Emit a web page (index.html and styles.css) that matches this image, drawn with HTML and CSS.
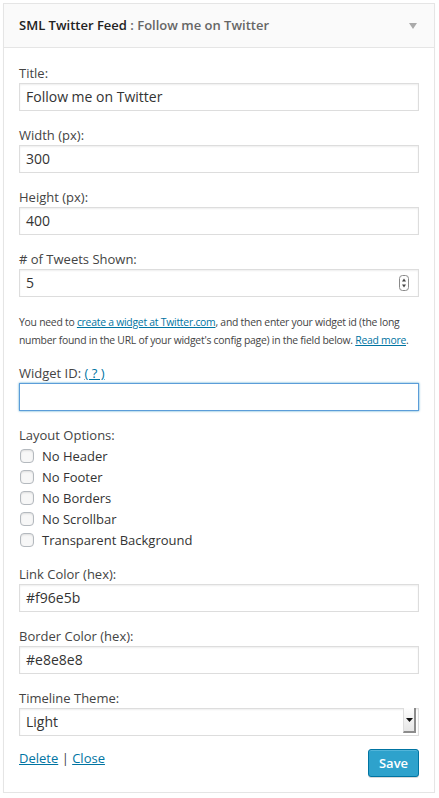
FILE: index.html
```html
<!DOCTYPE html>
<html>
<head>
<meta charset="utf-8">
<link rel="stylesheet" href="styles.css">
</head>
<body>
<div class="widget">
  <div class="widget-top">
    <h4 class="widget-title">SML Twitter Feed <span class="in-title">: Follow me on Twitter</span></h4>
    <span class="toggle-arrow"></span>
  </div>
  <div class="widget-inside">
    <div class="field">
      <label class="lbl">Title:</label>
      <div class="input">Follow me on Twitter</div>
    </div>
    <div class="field">
      <label class="lbl">Width (px):</label>
      <div class="input">300</div>
    </div>
    <div class="field">
      <label class="lbl">Height (px):</label>
      <div class="input">400</div>
    </div>
    <div class="field">
      <label class="lbl"># of Tweets Shown:</label>
      <div class="input number">5
        <svg class="spinner" width="10" height="16" viewBox="0 0 10 16">
          <rect x="0.5" y="0.5" width="9" height="15" rx="3" fill="#fdfdfd" stroke="#8a8a8a"/>
          <path d="M3 6.5 L5 3.5 L7 6.5 Z" fill="#444"/>
          <path d="M3 9.5 L5 12.5 L7 9.5 Z" fill="#444"/>
        </svg>
      </div>
    </div>
    <p class="desc">You need to <a href="#">create a widget at Twitter.com</a>, and then enter your widget id (the long number found in the URL of your widget's config page) in the field below. <a href="#">Read more</a>.</p>
    <div class="field">
      <label class="lbl">Widget ID: <a href="#">( ? )</a></label>
      <div class="input focus"></div>
    </div>
    <div class="field">
      <label class="lbl">Layout Options:</label>
      <ul class="checks">
        <li><span class="cb"></span>No Header</li>
        <li><span class="cb"></span>No Footer</li>
        <li><span class="cb"></span>No Borders</li>
        <li><span class="cb"></span>No Scrollbar</li>
        <li><span class="cb"></span>Transparent Background</li>
      </ul>
    </div>
    <div class="field">
      <label class="lbl">Link Color (hex):</label>
      <div class="input">#f96e5b</div>
    </div>
    <div class="field">
      <label class="lbl">Border Color (hex):</label>
      <div class="input">#e8e8e8</div>
    </div>
    <div class="field">
      <label class="lbl">Timeline Theme:</label>
      <div class="input select">Light
        <span class="sel-btn"><svg width="7" height="4" viewBox="0 0 7 4"><path d="M0 0 L7 0 L3.5 4 Z" fill="#111"/></svg></span>
      </div>
    </div>
    <div class="actions">
      <div class="links"><a href="#">Delete</a> | <a href="#">Close</a></div>
      <button class="save">Save</button>
    </div>
  </div>
</div>
</body>
</html>
```

FILE: styles.css
```css
html, body {
  margin: 0;
  padding: 0;
  background: #fff;
}
body {
  font-family: "Open Sans", "Liberation Sans", sans-serif;
  color: #444;
  padding: 3px 4px 0 3px;
}
.widget {
  border: 1px solid #e5e5e5;
  background: #fff;
  width: 432px;
  box-sizing: border-box;
  box-shadow: 0 1px 1px rgba(0,0,0,0.04);
}
.widget-top {
  background: #fafafa;
  height: 43px;
  border-bottom: 1px solid #e5e5e5;
  display: flex;
  align-items: center;
  justify-content: space-between;
  padding: 0 15px;
}
.widget-title {
  margin: 0;
  font-size: 13px;
  font-weight: 600;
  color: #222;
  position: relative;
  top: -1px;
}
.in-title {
  color: #666;
  font-weight: 600;
}
.toggle-arrow {
  width: 0;
  height: 0;
  border-left: 4px solid transparent;
  border-right: 4px solid transparent;
  border-top: 6px solid #aaa;
  margin-right: 2px;
}
.widget-inside {
  padding: 16px 15px 15px 15px;
}
.field {
  margin-bottom: 15px;
}
.lbl {
  display: block;
  font-size: 13px;
  line-height: 18px;
  color: #444;
  margin-bottom: 1px;
}
.lbl a {
  color: #0074a2;
}
.input {
  position: relative;
  height: 28px;
  box-sizing: border-box;
  border: 1px solid #ddd;
  box-shadow: inset 0 1px 2px rgba(0,0,0,0.07);
  background: #fff;
  font-size: 14px;
  line-height: 26px;
  color: #333;
  padding: 0 6px;
}
.input.focus {
  border-color: #5b9dd9;
  box-shadow: 0 0 2px rgba(30,140,190,0.8);
}
.spinner {
  position: absolute;
  right: 9px;
  top: 5px;
}
.sel-btn {
  position: absolute;
  right: 2px;
  top: -1px;
  width: 13px;
  height: 25px;
  box-sizing: border-box;
  background: linear-gradient(#fefefe, #e6e6e6);
  border-left: 1px solid #ddd;
  border-right: 2px solid #8c8c8c;
  border-bottom: 2px solid #8c8c8c;
  display: flex;
  align-items: center;
  justify-content: center;
}
.desc {
  font-size: 10.4px;
  letter-spacing: -0.25px;
  line-height: 18px;
  color: #444;
  margin: 16px 0 15px 0;
}
.desc a {
  color: #0074a2;
}
.checks {
  list-style: none;
  margin: 1px 0 0 0;
  padding: 0;
}
.checks li {
  display: flex;
  align-items: center;
  height: 21px;
  font-size: 13px;
  color: #333;
}
.cb {
  width: 12px;
  height: 12px;
  border: 1px solid #b4b9be;
  border-radius: 4px;
  box-shadow: inset 0 1px 2px rgba(0,0,0,0.1);
  background: #f7f7f7;
  margin: 0 8px 0 1px;
  flex: none;
}
.actions {
  display: flex;
  justify-content: space-between;
  align-items: flex-start;
  margin-top: -2px;
}
.links {
  font-size: 13px;
  line-height: 18px;
  color: #444;
}
.links a {
  color: #0074a2;
}
.save {
  font-family: "Open Sans", "Liberation Sans", sans-serif;
  width: 51px;
  height: 28px;
  background: #2ea2cc;
  border: 1px solid #0074a2;
  border-radius: 3px;
  color: #fff;
  font-size: 13px;
  font-weight: 600;
  box-shadow: inset 0 1px 0 rgba(120,200,230,0.5), 0 1px 0 rgba(0,0,0,0.15);
  padding: 0;
}
```
